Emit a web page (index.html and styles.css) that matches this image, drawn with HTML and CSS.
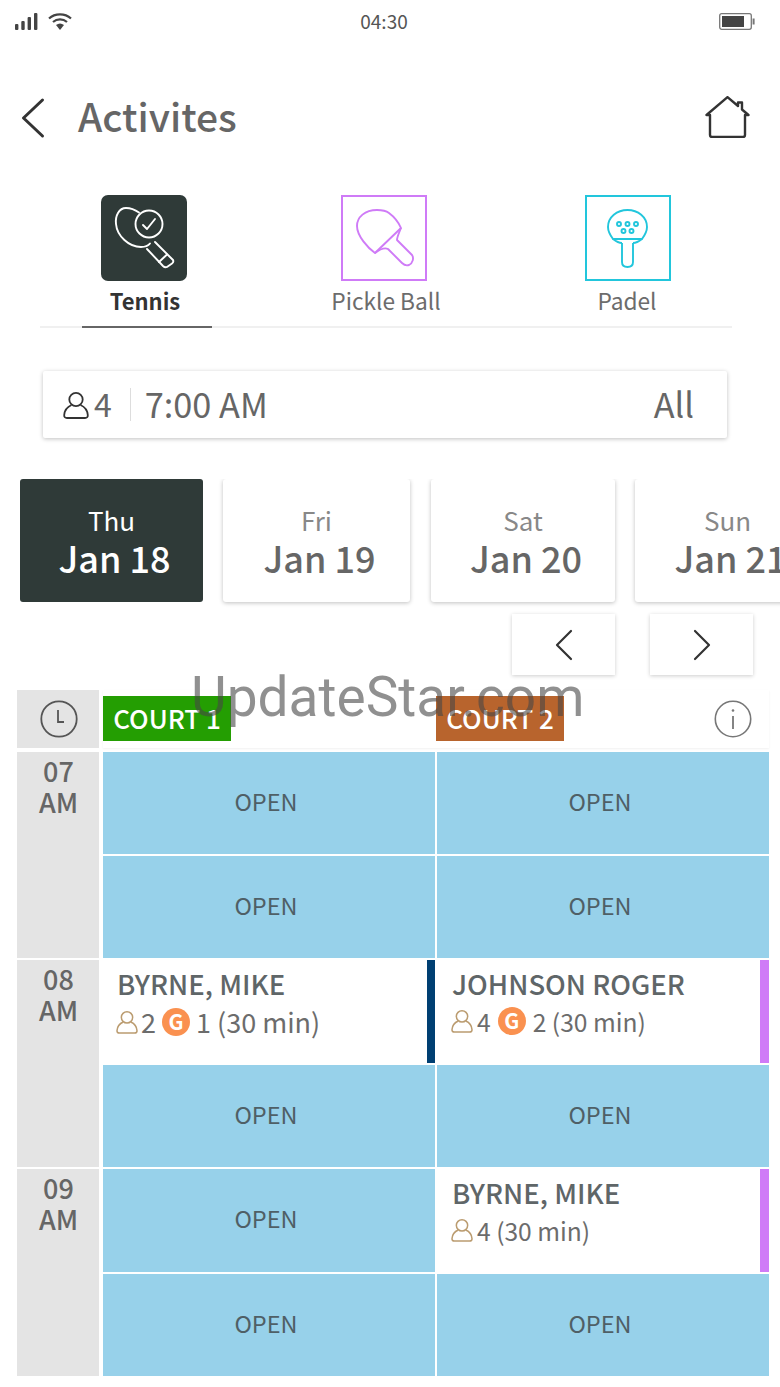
FILE: index.html
```html
<!DOCTYPE html>
<html lang="en">
<head>
    <meta charset="UTF-8">
    <meta name="viewport" content="width=device-width, initial-scale=1.0">
    <title>Activites</title>
    <link rel="stylesheet" href="styles.css">
</head>
<body>
    <svg class="defs" width="0" height="0">
        <symbol id="person" viewBox="0 0 26 28">
            <circle cx="13" cy="8.5" r="6.7" fill="none" stroke="currentColor" stroke-width="1.8"/>
            <path d="M8.5 14 C4 16 1.5 20 1.2 24 Q1 27 4 27 H22 Q25 27 24.8 24 C24.5 20 22 16 17.5 14" fill="none" stroke="currentColor" stroke-width="1.8"/>
        </symbol>
    </svg>

    <div class="status-bar">
        <div class="status-left">
            <svg width="23" height="17" viewBox="0 0 23 17"><g fill="#444"><rect x="0" y="11" width="3.4" height="6" rx="1"/><rect x="6.3" y="8" width="3.4" height="9" rx="1"/><rect x="12.6" y="4" width="3.4" height="13" rx="1"/><rect x="19" y="0" width="3.4" height="17" rx="1"/></g></svg>
            <svg width="24" height="17" viewBox="0 0 24 17"><g fill="none" stroke="#444" stroke-width="2.2"><path d="M1 5.5 C7 0 17 0 23 5.5"/><path d="M5 9 C9 5.5 15 5.5 19 9"/></g><path d="M8 12 Q12 9 16 12 L12 17 Z" fill="#444"/></svg>
        </div>
        <div class="status-time">04:30</div>
        <svg class="battery" width="36" height="17" viewBox="0 0 36 17"><rect x="0.7" y="0.7" width="31.6" height="15.6" rx="2" fill="none" stroke="#777" stroke-width="1.3"/><rect x="3" y="3" width="22" height="11" fill="#444"/><rect x="33.6" y="5.5" width="2" height="6" fill="#777"/></svg>
    </div>

    <header class="top-bar">
        <svg class="back" width="24" height="42" viewBox="0 0 24 42"><path d="M21.5 3 L2.5 21 L21.5 39" fill="none" stroke="#333" stroke-width="3" stroke-linecap="round" stroke-linejoin="round"/></svg>
        <h1>Activites</h1>
        <svg class="home" width="45" height="42" viewBox="0 0 45 42"><path d="M5 19 V39 Q5 41 7 41 H38 Q40 41 40 39 V19 H43.5 L37 13.5 V6.5 H33 V10 L22.5 1.2 L1.5 19 Z" fill="none" stroke="#333" stroke-width="2.4" stroke-linejoin="round"/></svg>
    </header>

    <nav class="tabs">
        <div class="tab tab-active">
            <div class="tab-icon tennis">
                <svg width="86" height="86" viewBox="0 0 86 86"><g fill="none" stroke="#fff" stroke-width="1.9" stroke-linecap="round" stroke-linejoin="round"><path d="M38 17.5 C33 14 29 13 25 13 C18 13 14 21 15 29 C16 41 28 52 40 52 C44 52 47 51 49 48.5"/><circle cx="48" cy="29" r="13.5"/><path d="M42 30 L46 34 L54 24"/><path d="M54 47 L72 65 Q73 67 71 68.500 L66 72 Q64 73 62 71 L46 54"/><path d="M66 59.500 L58 67"/></g></svg>
            </div>
            <span>Tennis</span>
        </div>
        <div class="tab tab-middle">
            <div class="tab-icon pickle">
                <svg width="82" height="82" viewBox="2 2 82 82"><g fill="none" stroke="#cf7bf7" stroke-width="1.9" stroke-linejoin="round"><path d="M60 33 C57 26 52 21 48 18 C44 15 40 15 36 15 C24 15 16 22 16 31 C16 41 27 53 34 58 Z"/><path d="M60 33 C58 38 56 42 56 45 L71 60 C73 63 72 68 68 70 C65 71 63 70 61 68 L47 54 C43 52 38 55 34 58"/></g></svg>
            </div>
            <span>Pickle Ball</span>
        </div>
        <div class="tab tab-last">
            <div class="tab-icon padel">
                <svg width="82" height="82" viewBox="2 2 82 82"><g fill="none" stroke="#22c6dc" stroke-width="1.9"><path d="M28 44 C25 40 23 36 23 32 C23 22 32 15 42.500 15 C53 15 62 22 62 32 C62 36 60 40 57 44 Z"/><path d="M37 48 V67 Q37 72 42.500 72 Q48 72 48 67 V48"/><path d="M28 44 Q33 48 37 48 M57 44 Q52 48 48 48"/><circle cx="34" cy="29" r="2"/><circle cx="42.500" cy="29" r="2"/><circle cx="51" cy="29" r="2"/><circle cx="38.500" cy="36" r="2"/><circle cx="46.500" cy="36" r="2"/></g></svg>
            </div>
            <span>Padel</span>
        </div>
    </nav>

    <div class="search-box">
        <svg class="person-icon" width="26" height="28"><use href="#person"/></svg>
        <span class="search-count">4</span>
        <span class="search-sep"></span>
        <span class="search-time">7:00 AM</span>
        <span class="search-all">All</span>
    </div>

    <div class="dates">
        <div class="date date-active date-a"><div class="day">Thu</div><div class="month">Jan 18</div></div>
        <div class="date date-b"><div class="day">Fri</div><div class="month">Jan 19</div></div>
        <div class="date date-c"><div class="day">Sat</div><div class="month">Jan 20</div></div>
        <div class="date date-d"><div class="day">Sun</div><div class="month">Jan 21</div></div>
    </div>

    <div class="pager">
        <div class="pager-btn"><svg width="18" height="32" viewBox="0 0 18 32"><path d="M16 2 L2 16 L16 30" fill="none" stroke="#333" stroke-width="2.2" stroke-linecap="round" stroke-linejoin="round"/></svg></div>
        <div class="pager-btn"><svg width="18" height="32" viewBox="0 0 18 32"><path d="M2 2 L16 16 L2 30" fill="none" stroke="#333" stroke-width="2.2" stroke-linecap="round" stroke-linejoin="round"/></svg></div>
    </div>

    <section class="schedule">
        <div class="sched-head">
            <div class="time-cell clock-cell">
                <svg width="38" height="38" viewBox="0 0 38 38"><circle cx="19" cy="19" r="17.700" fill="none" stroke="#555" stroke-width="1.800"/><path d="M18 10 V22 H24" fill="none" stroke="#555" stroke-width="1.800"/></svg>
            </div>
            <div class="court-heads">
                <div class="court-head"><span class="court-tag court-green">COURT 1</span></div>
                <div class="court-head">
                    <span class="court-tag court-orange">COURT 2</span>
                    <svg class="info" width="38" height="38" viewBox="0 0 38 38"><circle cx="19" cy="19" r="17.700" fill="none" stroke="#777" stroke-width="1.600"/><path d="M19 16 V29" stroke="#777" stroke-width="1.800"/><circle cx="19" cy="10.500" r="1.300" fill="#777"/></svg>
                </div>
            </div>
        </div>

        <div class="hour hour-first">
            <div class="time-cell">07<br>AM</div>
            <div class="slots">
                <div class="slot">OPEN</div>
                <div class="slot">OPEN</div>
                <div class="slot">OPEN</div>
                <div class="slot">OPEN</div>
            </div>
        </div>

        <div class="hour">
            <div class="time-cell">08<br>AM</div>
            <div class="slots">
                <div class="booking booking-blue">
                    <div class="booking-name">BYRNE, MIKE</div>
                    <div class="booking-info info-wide">
                        <svg class="person-small" width="22" height="24"><use href="#person"/></svg>
                        <span>2</span><span class="guest">G</span><span>1 (30 min)</span>
                    </div>
                </div>
                <div class="booking booking-purple">
                    <div class="booking-name">JOHNSON ROGER</div>
                    <div class="booking-info">
                        <svg class="person-small" width="22" height="24"><use href="#person"/></svg>
                        <span>4</span><span class="guest">G</span><span>2 (30 min)</span>
                    </div>
                </div>
                <div class="slot">OPEN</div>
                <div class="slot">OPEN</div>
            </div>
        </div>

        <div class="hour">
            <div class="time-cell">09<br>AM</div>
            <div class="slots">
                <div class="slot">OPEN</div>
                <div class="booking booking-purple">
                    <div class="booking-name">BYRNE, MIKE</div>
                    <div class="booking-info">
                        <svg class="person-small" width="22" height="24"><use href="#person"/></svg>
                        <span>4 (30 min)</span>
                    </div>
                </div>
                <div class="slot">OPEN</div>
                <div class="slot">OPEN</div>
            </div>
        </div>
    </section>

    <div class="watermark">UpdateStar.com</div>
</body>
</html>
```

FILE: styles.css
```css
* { box-sizing: border-box; }
html, body { margin: 0; padding: 0; }
body { width: 780px; height: 1387px; overflow: hidden; position: relative; background: #fff; color: #666; font-family: "Noto Sans CJK JP", "Open Sans", sans-serif; }
.defs { position: absolute; }

.status-bar { height: 42px; padding: 13px 25px 0 15px; display: grid; grid-template-columns: 1fr auto 1fr; align-items: start; }
.status-left { display: flex; gap: 10px; }
.status-time { font-size: 19px; line-height: 16px; color: #555; margin-left: -2px; }
.battery { justify-self: end; }

.top-bar { height: 56px; margin-top: 45px; padding: 0 30px 0 21px; display: flex; align-items: center; }
.top-bar h1 { margin: 0 0 0 33px; font-size: 39px; line-height: 42px; font-weight: 500; color: #666; flex: 1; }
.back { display: block; margin-top: 5px; }
.home { display: block; margin-top: 4px; }

.tabs { height: 133px; margin: 52px 48px 0 40px; padding-left: 39px; display: flex; gap: 110px; border-bottom: 2px solid #f0f0f0; position: relative; }
.tab { width: 130px; height: 133px; display: flex; flex-direction: column; align-items: center; font-size: 22.7px; line-height: 32px; color: #6c6c6c; }
.tab span { margin-top: 4px; }
.tab-middle span { margin-left: 4px; }
.tab-last { margin-left: 4px; }
.tab-last span { margin-left: -2px; }
.tab-active { color: #333; font-weight: 700; font-size: 22px; border-bottom: 2px solid #666; margin-left: 3px; margin-right: -3px; }
.tab-active .tab-icon { margin-left: -6px; }
.tab-active span { margin: 3px 0 0 -4px; }
.tab-icon { width: 86px; height: 86px; flex: none; display: flex; align-items: center; justify-content: center; }
.tennis { background: #2f3a38; border-radius: 7px; }
.pickle { border: 2px solid #cf7bf7; }
.padel { border: 2px solid #22c6dc; }

.search-box { width: 684px; height: 67px; margin: 43px 0 0 43px; padding: 0 33px 0 20px; display: flex; align-items: center; background: #fff; border-radius: 2px; box-shadow: 0 1px 4px rgba(0, 0, 0, 0.25); font-size: 34.300px; line-height: 40px; color: #666; }
.person-icon { color: #333; }
.search-count { margin: -3px 0 0 5px; font-size: 32px; }
.search-sep { width: 1px; height: 33px; background: #ddd; margin: 0 14px 0 18px; }
.search-time { flex: 1; margin-top: -4px; }
.search-all { margin-top: -4px; }

.dates { margin: 41px 0 0 20px; display: flex; width: 760px; overflow: hidden; padding-bottom: 6px; }
.date { height: 123px; flex: none; display: flex; flex-direction: column; align-items: center; background: #fff; border-radius: 3px; box-shadow: 0 1px 4px rgba(0, 0, 0, 0.25); padding-top: 25px; }
.date-a { width: 183px; }
.date-b { width: 187px; margin-left: 20px; }
.date-c { width: 184px; margin-left: 21px; }
.date-d { width: 185px; margin-left: 20px; }
.day { font-size: 26px; line-height: 32px; color: #888; }
.month { font-size: 36px; line-height: 43px; font-weight: 500; color: #666; margin-left: 6px; white-space: nowrap; }
.date-active { background: #2f3a38; box-shadow: none; }
.date-active .day { color: #fff; }
.date-active .month { color: #fff; }

.pager { margin: 6px 0 0 512px; display: flex; gap: 35px; }
.pager-btn { width: 103px; height: 61px; display: flex; align-items: center; justify-content: center; background: #fff; box-shadow: 0 1px 4px rgba(0, 0, 0, 0.2); }

.schedule { margin: 15px 0 0 17px; width: 752px; display: flex; flex-direction: column; gap: 2px; }
.sched-head { height: 58px; display: flex; margin-bottom: 2px; }
.time-cell { width: 82px; flex: none; background: #e4e4e4; font-size: 27px; line-height: 31px; font-weight: 500; color: #666; text-align: center; padding: 3px 0 0 1px; }
.clock-cell { padding-top: 10px; height: 58px; }
.clock-cell svg { display: block; margin: 0 auto; }
.court-heads { margin-left: 4px; flex: 1; display: grid; grid-template-columns: 332px 334px; box-shadow: 0 1px 2px rgba(0, 0, 0, 0.06); height: 58px; }
.court-head { padding: 6px 0 0 1px; display: flex; align-items: flex-start; justify-content: space-between; }
.court-head:first-child { padding-left: 0; }
.court-tag { width: 128px; height: 45px; text-align: center; color: #fff; font-size: 26px; line-height: 43px; font-weight: 500; }
.court-green { background: #249e02; }
.court-orange { background: #b8642d; }
.info { margin: 4px 17px 0 0; }

.hour { height: 207px; display: flex; }
.hour-first { height: 206px; }
.slots { margin-left: 4px; width: 666px; display: grid; grid-template-columns: 332px 332px; grid-template-rows: 1fr 1fr; gap: 2px; }
.slot { display: flex; align-items: center; justify-content: center; padding: 0 6px 4px 0; background: #97d1ea; color: #4f5f66; font-size: 23.500px; line-height: 30px; }

.booking { padding: 7px 0 0 15px; background: #fff; }
.booking-blue { border-right: 8px solid #003f72; padding-left: 14px; }
.booking-purple { border-right: 9px solid #cf7bf7; }
.booking-name { font-size: 27.500px; line-height: 33px; font-weight: 500; color: #5f6668; white-space: nowrap; }
.booking-info { margin-top: 5px; display: flex; align-items: center; font-size: 24.600px; line-height: 32px; color: #6c6c6c; white-space: nowrap; }
.info-wide { margin-top: 6px; font-size: 27px; }
.person-small { color: #bb9c70; margin: 0 4px 0 -1px; flex: none; }
.info-wide .person-small { margin-right: 3px; }
.guest { width: 28px; height: 28px; flex: none; margin: 0 7px; border-radius: 50%; background: #fa9150; color: #fff; font-size: 21px; line-height: 27px; font-weight: 700; text-align: center; }
.info-wide .guest { margin: 0 6px; }

.watermark { position: absolute; left: 191px; top: 659px; font-family: Roboto, "Open Sans", sans-serif; font-weight: 400; font-size: 55px; line-height: 76px; color: rgba(70, 70, 70, 0.6); white-space: nowrap; }
```
